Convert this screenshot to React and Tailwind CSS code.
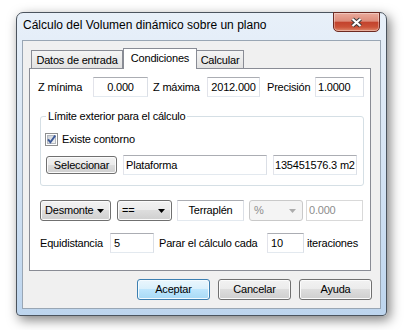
import React from "react";

const btnFace =
  "border-[#707070] bg-[linear-gradient(#f2f2f2,#ebebeb_50%,#dddddd_50%,#cfcfcf)] shadow-[inset_0_0_0_1px_#fbfbfb]";

function Arrow({ color = "#000" }) {
  return (
    <svg width="7" height="4" viewBox="0 0 7 4">
      <path d="M0 0H7L3.5 4Z" fill={color} />
    </svg>
  );
}

function TextBox({ children, className = "", center = false, disabled = false }) {
  return (
    <div
      className={`flex items-center h-[20px] border whitespace-nowrap ${
        center ? "justify-center" : "pl-[2px]"
      } ${
        disabled
          ? "bg-white text-[#8d8d8d] border-[#d9d9d9]"
          : "bg-white border-t-[#abadb3] border-l-[#e2e3ea] border-r-[#dbdfe6] border-b-[#e3e9ef]"
      } ${className}`}
    >
      {children}
    </div>
  );
}

function Combo({ label, className = "", disabled = false }) {
  return (
    <div
      className={`flex items-center justify-between h-[21px] pl-[4px] pr-[6px] rounded-[3px] border ${
        disabled ? "border-[#c9c9c9] bg-[#f4f4f4] text-[#8d8d8d]" : btnFace
      } ${className}`}
    >
      <span>{label}</span>
      <Arrow color={disabled ? "#acacac" : "#000"} />
    </div>
  );
}

function Button({ children, className = "", primary = false }) {
  return (
    <div
      className={`flex items-center justify-center rounded-[3px] border ${
        primary
          ? "border-[#3c7fb1] bg-[linear-gradient(#eaf6fd,#d9f0fc_50%,#bee6fd_50%,#a7d9f5)] shadow-[inset_0_0_0_1px_#f4fbff]"
          : btnFace
      } ${className}`}
    >
      {children}
    </div>
  );
}

function CheckBox() {
  return (
    <svg width="13" height="13" viewBox="0 0 13 13">
      <defs>
        <linearGradient id="cb" x1="0" y1="0" x2="1" y2="1">
          <stop offset="0" stopColor="#cbcfd5" />
          <stop offset="1" stopColor="#f7f7f7" />
        </linearGradient>
      </defs>
      <rect x="0.5" y="0.5" width="12" height="12" fill="#fff" stroke="#8e8f8f" />
      <rect x="2.5" y="2.5" width="8" height="8" fill="url(#cb)" stroke="#b4b9bf" />
      <path d="M3 6.3L5.4 9.2L10.2 2.6" stroke="#3d5a99" strokeWidth="1.9" fill="none" />
    </svg>
  );
}

function Tab({ children, active = false, className = "" }) {
  return (
    <div
      className={`flex items-center justify-center border border-b-0 border-[#898c95] ${
        active
          ? "relative z-10 h-[21px] -mb-px bg-white pb-[1px]"
          : "h-[18px] pt-[1px] bg-linear-to-b from-[#f4f4f4] to-[#e2e2e2]"
      } ${className}`}
    >
      {children}
    </div>
  );
}

export default function App() {
  return (
    <div className="w-[405px] h-[330px] bg-white pt-[12px] pl-[16px] overflow-hidden font-['Liberation_Sans',Arial,sans-serif] text-black">
      <div className="w-[371px] h-[304px] flex flex-col rounded-t-[7px] rounded-b-[4px] border border-[#4b545e] bg-linear-to-b from-[#e8f0f9] via-[#d5e4f4] to-[#bdd5ee] shadow-[3px_4px_12px_rgba(0,0,0,0.5)]">
        {/* title bar */}
        <div className="h-[27px] flex items-start justify-between pl-[6px] pr-[6px]">
          <span className="mt-[5px] text-[12px] leading-[15px] whitespace-nowrap">
            Cálculo del Volumen dinámico sobre un plano
          </span>
          <div className="-mt-px w-[47px] h-[20px] flex items-center justify-center rounded-b-[5px] border border-[#6d2a22] bg-[linear-gradient(#eaaa9c,#dd8c7a_45%,#c3432d_52%,#cb5238_78%,#df8a6e)] shadow-[inset_0_0_0_1px_rgba(255,255,255,0.35)]">
            <svg width="13" height="11" viewBox="0 0 13 11">
              <path d="M2.5 2L10.5 9M10.5 2L2.5 9" stroke="#3a3a3a" strokeWidth="4.2" />
              <path d="M2.5 2L10.5 9M10.5 2L2.5 9" stroke="#fff" strokeWidth="2.2" />
            </svg>
          </div>
        </div>

        {/* client area */}
        <div className="mx-[5px] h-[269px] border border-[#99a6b4] bg-[#f0f0f0] pt-[7px] text-[11px] tracking-[-0.2px]">
          <div className="ml-[6px] pl-[2px] h-[20px] flex items-end">
            <Tab className="w-[92px]">Datos de entrada</Tab>
            <Tab active className="w-[74px]">Condiciones</Tab>
            <Tab className="w-[47px] border-l-0">Calcular</Tab>
          </div>

          <div className="ml-[6px] w-[342px] h-[203px] border border-[#898c95] bg-white pt-[8px] pl-[10px]">
            <div className="-ml-[2px] h-[20px] flex items-center whitespace-nowrap">
              <span className="w-[55px]">Z mínima</span>
              <TextBox center className="w-[55px]">0.000</TextBox>
              <span className="ml-[5px] w-[54px]">Z máxima</span>
              <TextBox center className="w-[53px]">2012.000</TextBox>
              <span className="ml-[7px] w-[48px]">Precisión</span>
              <TextBox className="w-[49px]">1.0000</TextBox>
            </div>

            <fieldset className="mt-[13px] w-[324px] rounded-[3px] border border-[#d5dfe5] pl-[4px] pr-[6px] pb-[10px]">
              <legend className="ml-[1px] px-[2px] leading-[13px]">
                Límite exterior para el cálculo
              </legend>
              <div className="mt-[10px] h-[13px] flex items-center gap-[4px]">
                <CheckBox />
                <span>Existe contorno</span>
              </div>
              <div className="mt-[9px] h-[20px] flex items-center">
                <Button className="ml-[1px] w-[71px] h-[18px]">Seleccionar</Button>
                <TextBox className="ml-[6px] w-[144px]">Plataforma</TextBox>
                <TextBox className="ml-[6px] w-[84px] !pl-[1px]">135451576.3 m2</TextBox>
              </div>
            </fieldset>

            <div className="mt-[14px] h-[21px] flex items-center">
              <Combo label="Desmonte" className="w-[71px]" />
              <Combo label="==" className="ml-[6px] w-[55px]" />
              <TextBox center className="ml-[5px] w-[67px] !h-[21px]">Terraplén</TextBox>
              <Combo label="%" disabled className="ml-[5px] w-[54px]" />
              <TextBox disabled className="ml-[3px] w-[57px] !h-[21px]">0.000</TextBox>
            </div>

            <div className="mt-[12px] h-[20px] flex items-center whitespace-nowrap">
              <span className="w-[70px]">Equidistancia</span>
              <TextBox className="w-[44px] !pl-[3px]">5</TextBox>
              <span className="ml-[5px] w-[108px]">Parar el cálculo cada</span>
              <TextBox className="w-[37px] !pl-[3px]">10</TextBox>
              <span className="ml-[3px]">iteraciones</span>
            </div>
          </div>

          <div className="mt-[8px] pr-[8px] flex justify-end gap-[8px]">
            <Button primary className="w-[73px] h-[21px]">Aceptar</Button>
            <Button className="w-[73px] h-[21px]">Cancelar</Button>
            <Button className="w-[73px] h-[21px]">Ayuda</Button>
          </div>
        </div>
      </div>
    </div>
  );
}
